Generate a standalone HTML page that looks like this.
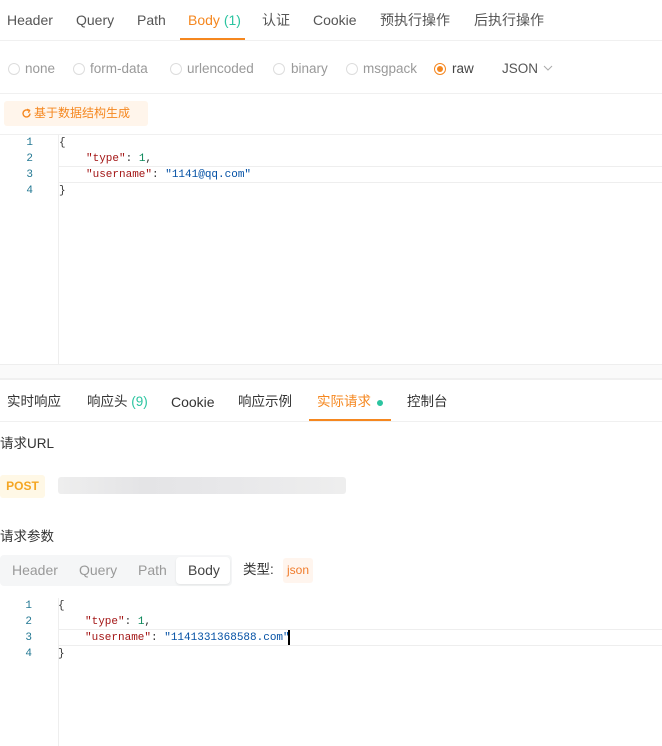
<!DOCTYPE html>
<html><head><meta charset="utf-8"><style>
*{margin:0;padding:0;box-sizing:border-box}
body{width:662px;height:746px;overflow:hidden;background:#fff;font-family:"Liberation Sans","Noto Sans CJK SC",sans-serif;font-size:13.5px;color:#333;position:relative}
.a{position:absolute;white-space:nowrap;line-height:20px}
.tab{top:10px;color:#555;font-size:14px}
.mono{font-family:"Liberation Mono","DejaVu Sans Mono",monospace;font-size:11px;line-height:16px}
.ln{color:#237893;width:14px;text-align:right}
.s{color:#a31515}.v{color:#0451a5}.n{color:#098658}
.radio{width:12px;height:12px;border:1px solid #ddd;border-radius:50%;top:63px}
.rl{top:59px;color:#999}
.hl{position:absolute;border-top:1px solid #eee;border-bottom:1px solid #eee;left:59px;right:0;height:17px}
</style></head><body>
<div class="a tab" style="left:7px">Header</div>
<div class="a tab" style="left:76px">Query</div>
<div class="a tab" style="left:137px">Path</div>
<div class="a tab" style="left:188px;color:#f5871f">Body <span style="color:#2bc4a0">(1)</span></div>
<div class="a tab" style="left:262px">认证</div>
<div class="a tab" style="left:313px">Cookie</div>
<div class="a tab" style="left:380px">预执行操作</div>
<div class="a tab" style="left:474px">后执行操作</div>
<div class="a" style="left:180px;top:38px;width:65px;height:2px;background:#f5871f"></div>
<div class="a" style="left:0;top:40px;width:662px;height:1px;background:#f0f0f0"></div>

<div class="a radio" style="left:8px"></div><div class="a rl" style="left:25px">none</div>
<div class="a radio" style="left:73px"></div><div class="a rl" style="left:90px">form-data</div>
<div class="a radio" style="left:170px"></div><div class="a rl" style="left:187px">urlencoded</div>
<div class="a radio" style="left:273px"></div><div class="a rl" style="left:291px">binary</div>
<div class="a radio" style="left:346px"></div><div class="a rl" style="left:363px">msgpack</div>
<div class="a radio" style="left:434px;border-color:#f5871f"><div style="width:6px;height:6px;border-radius:50%;background:#f5871f;margin:2px"></div></div>
<div class="a rl" style="left:452px;color:#444">raw</div>
<div class="a rl" style="left:502px;color:#555">JSON</div>
<svg class="a" style="left:543px;top:65px" width="10" height="6" viewBox="0 0 10 6"><path d="M1 1L5 5L9 1" fill="none" stroke="#aaa" stroke-width="1"/></svg>
<div class="a" style="left:0;top:93px;width:662px;height:1px;background:#f0f0f0"></div>

<div class="a" style="left:4px;top:101px;width:144px;height:25px;background:#fff5eb;border-radius:3px;color:#f5871f;font-size:12px;line-height:25px;padding-left:30px">基于数据结构生成</div>
<svg class="a" style="left:21px;top:108px" width="11" height="11" viewBox="0 0 11 11"><path d="M9 5.5A3.5 3.5 0 1 1 7.5 2.6" fill="none" stroke="#f5871f" stroke-width="1.4"/><path d="M6 1.2L8.6 2.3L7.4 4.8" fill="none" stroke="#f5871f" stroke-width="1.3"/></svg>
<div class="a" style="left:0;top:134px;width:662px;height:1px;background:#f0f0f0"></div>
<div class="a" style="left:58px;top:135px;width:1px;height:229px;background:#eee"></div>
<div class="hl" style="top:166px"></div>
<div class="a mono ln" style="left:19px;top:135px">1</div>
<div class="a mono ln" style="left:19px;top:151px">2</div>
<div class="a mono ln" style="left:19px;top:167px">3</div>
<div class="a mono ln" style="left:19px;top:183px">4</div>
<div class="a mono" style="left:59px;top:135px">{</div>
<div class="a mono" style="left:86px;top:151px"><span class="s">"type"</span>: <span class="n">1</span>,</div>
<div class="a mono" style="left:86px;top:167px"><span class="s">"username"</span>: <span class="v">"1141@qq.com"</span></div>
<div class="a mono" style="left:59px;top:183px">}</div>
<div class="a" style="left:0;top:364px;width:662px;height:1px;background:#eee"></div>
<div class="a" style="left:0;top:365px;width:662px;height:13px;background:#fafafa"></div>
<div class="a" style="left:0;top:378px;width:662px;height:2px;background:#f0f0f0"></div>

<div class="a" style="left:7px;top:392px">实时响应</div>
<div class="a" style="left:87px;top:392px">响应头 <span style="color:#2bc4a0">(9)</span></div>
<div class="a" style="left:171px;top:392px;font-size:14px">Cookie</div>
<div class="a" style="left:238px;top:392px">响应示例</div>
<div class="a" style="left:317px;top:392px;color:#f5871f">实际请求</div>
<div class="a" style="left:377px;top:400px;width:6px;height:6px;border-radius:50%;background:#2bc4a0"></div>
<div class="a" style="left:407px;top:392px">控制台</div>
<div class="a" style="left:309px;top:419px;width:82px;height:2px;background:#f5871f"></div>
<div class="a" style="left:0;top:421px;width:662px;height:1px;background:#f0f0f0"></div>

<div class="a" style="left:0;top:434px">请求URL</div>
<div class="a" style="left:0;top:475px;width:45px;height:23px;background:#fff8e6;border-radius:3px;color:#f5a623;font-weight:bold;font-size:12px;line-height:23px;text-align:center">POST</div>
<div class="a" style="left:58px;top:477px;width:288px;height:17px;background:linear-gradient(90deg,#eee,#e4e4e6 30%,#e8e8ea 60%,#eee);border-radius:3px"></div>
<div class="a" style="left:0;top:527px">请求参数</div>
<div class="a" style="left:0;top:555px;width:232px;height:31px;background:#f5f6f7;border-radius:4px"></div>
<div class="a" style="left:176px;top:557px;width:54px;height:27px;background:#fff;border-radius:4px;box-shadow:0 1px 2px rgba(0,0,0,.08)"></div>
<div class="a" style="left:12px;top:560px;color:#999;font-size:14px">Header</div>
<div class="a" style="left:79px;top:560px;color:#999;font-size:14px">Query</div>
<div class="a" style="left:138px;top:560px;color:#999;font-size:14px">Path</div>
<div class="a" style="left:188px;top:560px;color:#444;font-size:14px">Body</div>
<div class="a" style="left:243px;top:560px">类型:</div>
<div class="a" style="left:283px;top:558px;width:30px;height:25px;background:#fff5ee;border-radius:3px;color:#f07c2c;font-size:12px;line-height:25px;text-align:center">json</div>

<div class="a" style="left:58px;top:598px;width:1px;height:148px;background:#eee"></div>
<div class="hl" style="top:629px"></div>
<div class="a mono ln" style="left:18px;top:598px">1</div>
<div class="a mono ln" style="left:18px;top:614px">2</div>
<div class="a mono ln" style="left:18px;top:630px">3</div>
<div class="a mono ln" style="left:18px;top:646px">4</div>
<div class="a mono" style="left:58px;top:598px">{</div>
<div class="a mono" style="left:85px;top:614px"><span class="s">"type"</span>: <span class="n">1</span>,</div>
<div class="a mono" style="left:85px;top:630px"><span class="s">"username"</span>: <span class="v">"1141331368588.com"</span></div>
<div class="a" style="left:288px;top:630px;width:2px;height:15px;background:#000"></div>
<div class="a mono" style="left:58px;top:646px">}</div>
</body></html>
